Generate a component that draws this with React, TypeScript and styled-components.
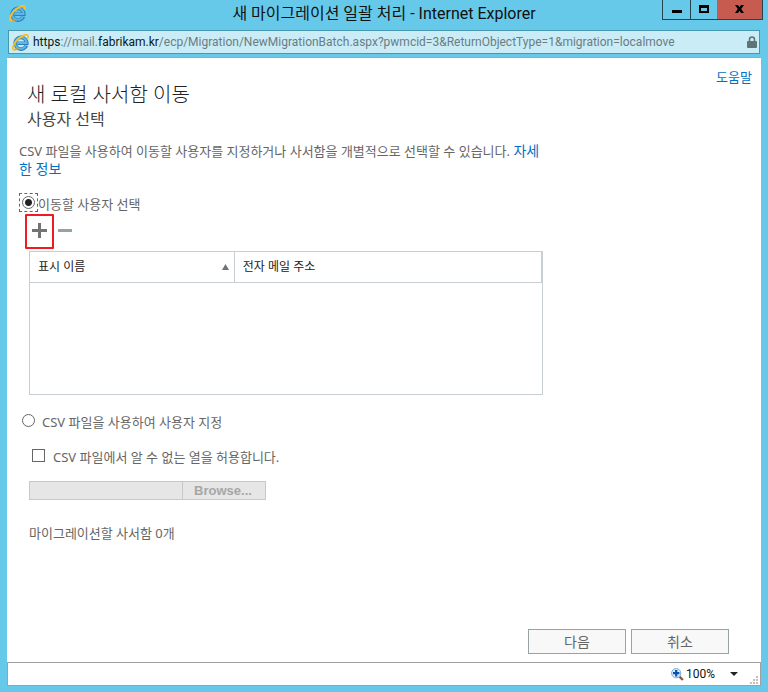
import React from "react";
import styled, { createGlobalStyle } from "styled-components";

const sans = `"Noto Sans", "Noto Sans CJK KR", sans-serif`;
const chromeSans = `Roboto, "Noto Sans CJK KR", sans-serif`;

const GlobalStyle = createGlobalStyle`
  *, *::before, *::after { box-sizing: border-box; }
  body { margin: 0; font-family: ${sans}; background: #66c9ea; }
  button, input { font-family: inherit; margin: 0; }
  a { color: #0072c6; text-decoration: none; }
`;

const Window = styled.div`
  display: flex;
  flex-direction: column;
  min-height: 100vh;
  padding: 0 7px 6px;
  background: #66c9ea;
`;

const TitleBar = styled.header`
  display: grid;
  grid-template-columns: 100px 1fr 100px;
  height: 30px;
`;

const TitleIcon = styled.span`
  display: flex;
  padding: 5px 0 0 2px;
`;

const WindowTitle = styled.h1`
  margin: 0;
  text-align: center;
  font-family: ${chromeSans};
  font-size: 16px;
  line-height: 28px;
  font-weight: 400;
  color: #111;
  white-space: nowrap;
`;

const WindowButtons = styled.div`
  display: flex;
  justify-content: flex-end;
  height: 20px;
  margin-right: -2px;
`;

const WindowButton = styled.button<{ $width: number; $close?: boolean }>`
  display: flex;
  align-items: center;
  justify-content: center;
  width: ${(p) => p.$width}px;
  height: 20px;
  padding: 0 0 1px;
  border: 1px solid #26434e;
  border-top: 0;
  border-left-width: ${(p) => (p.$close ? 0 : 1)}px;
  margin-right: ${(p) => (p.$close ? 0 : -1)}px;
  background: ${(p) => (p.$close ? "#c75b50" : "#66c9ea")};
`;

const AddressBar = styled.div`
  display: flex;
  align-items: center;
  gap: 4px;
  height: 24px;
  margin: 0 1px 3px;
  padding: 0 2px 0 3px;
  border: 1px solid #4797b0;
  background: #c9ecf7;
`;

const Address = styled.span`
  flex: 1;
  overflow: hidden;
  font-family: ${chromeSans};
  font-size: 12px;
  line-height: 22px;
  color: #6b7c83;
  white-space: nowrap;

  b {
    font-weight: 400;
    color: #0b1a20;
  }
`;

const Page = styled.main`
  flex: 1;
  display: flex;
  flex-direction: column;
  padding: 11px 9px 8px 12px;
  border-top: 1px solid #8daebb;
  background: #fff;
  color: #666;
  font-size: 13px;
  line-height: 18px;
`;

const HelpRow = styled.nav`
  display: flex;
  justify-content: flex-end;
  line-height: 16px;
`;

const Heading = styled.h2`
  margin: 0 0 0 8px;
  font-size: 20px;
  line-height: 20px;
  font-weight: 300;
  color: #222;
`;

const SubHeading = styled.h3`
  margin: 0 0 0 8px;
  font-size: 16px;
  line-height: 28px;
  font-weight: 400;
  color: #444;
`;

const Form = styled.form`
  flex: 1;
  display: flex;
  flex-direction: column;
`;

const Description = styled.p`
  max-width: 532px;
  margin: 9px 0 15px;
`;

const MoreLink = styled.a`
  font-size: 14px;
`;

const Choice = styled.label<{ $gap?: number }>`
  display: flex;
  align-items: center;
  gap: ${(p) => p.$gap ?? 0}px;
  height: 21px;
`;

const NestedChoice = styled(Choice)`
  margin: 14px 0 0 10px;
`;

const TickFrame = styled.span`
  display: flex;
  align-self: flex-start;
  padding: 3px;

  &:has(input[type="radio"]:checked) {
    outline: 1px dashed #666;
    outline-offset: -1px;
  }
`;

const Tick = styled.input`
  appearance: none;
  flex: none;
  width: 13px;
  height: 13px;
  border: 1px solid #666;
  background: #fff;

  &[type="radio"] {
    border-radius: 50%;
  }

  &:checked {
    background: radial-gradient(circle, #222 0 3px, #fff 4px);
  }
`;

const ToolBar = styled.div`
  display: flex;
  align-items: center;
  gap: 2px;
  margin: 0 0 2px 6px;
`;

const ToolButton = styled.button<{ $marked?: boolean }>`
  display: flex;
  align-items: center;
  justify-content: center;
  width: ${(p) => (p.$marked ? 29 : 18)}px;
  height: 35px;
  padding: 0 0 2px;
  border: ${(p) => (p.$marked ? "2px solid #ed1c24" : "0")};
  border-radius: 1px;
  background: none;
`;

const MailboxTable = styled.table`
  width: 514px;
  max-width: calc(100% - 10px);
  margin: 0 0 16px 10px;
  border: 1px solid #c8cfd2;
  border-spacing: 0;
  table-layout: fixed;
`;

const ColumnHeader = styled.th<{ $width?: string }>`
  width: ${(p) => p.$width ?? "auto"};
  height: 31px;
  padding: 0 5px 0 8px;
  border-right: 1px solid #c8cfd2;
  border-bottom: 1px solid #c8cfd2;
  font-size: 12px;
  line-height: 18px;
  font-weight: 400;
  text-align: left;
  color: #222;
`;

const HeaderContent = styled.span`
  display: flex;
  align-items: center;
  justify-content: space-between;
`;

const EmptyCell = styled.td`
  height: 111px;
  padding: 0;
`;

const FilePicker = styled.div`
  display: flex;
  margin: 14px 0 24px 10px;
`;

const FileName = styled.input`
  width: 154px;
  height: 19px;
  border: 1px solid #c8c8c8;
  background: #e6e6e6;
`;

const Browse = styled.button`
  width: 84px;
  height: 19px;
  margin-left: -1px;
  padding: 0 2px 0 0;
  border: 1px solid #c8c8c8;
  background: #e6e6e6;
  color: #a6a6a6;
  font: bold 13px/16px "Liberation Sans", sans-serif;
`;

const Total = styled.p`
  margin: 0 10px;
`;

const Actions = styled.div`
  display: flex;
  justify-content: flex-end;
  gap: 5px;
  margin-top: auto;
  padding-right: 23px;
`;

const ActionButton = styled.button`
  width: 98px;
  height: 25px;
  padding: 0;
  border: 1px solid #98a3a6;
  background: #f8f8f8;
  color: #666;
  font-size: 14px;
  line-height: 20px;
`;

const StatusBar = styled.footer`
  display: flex;
  align-items: center;
  justify-content: flex-end;
  height: 24px;
  padding-right: 1px;
  border: 1px solid #a0a0a0;
  background: #fff;
`;

const ZoomButton = styled.button`
  display: flex;
  align-items: center;
  gap: 2px;
  height: 20px;
  padding: 0;
  border: 0;
  background: none;
  color: #111;
  font-family: ${chromeSans};
  font-size: 12px;
  line-height: 20px;
`;

const ZoomArrow = styled.span`
  display: flex;
  margin: 0 12px 0 13px;
`;

const Grip = styled.svg`
  align-self: flex-end;
`;

function ExplorerLogo() {
  return (
    <svg width="17" height="17" viewBox="0 0 17 17" aria-hidden="true">
      <path
        d="M14.400 11.400A5.800 5.800 0 1 1 14.800 9.200H5.400"
        fill="none"
        stroke="#2a7fbd"
        strokeWidth="3.600"
      />
      <path
        d="M14.200 11.200A5.700 5.700 0 1 1 14.600 9.100H5.400"
        fill="none"
        stroke="#5db5e8"
        strokeWidth="2"
      />
      <path
        d="M3.200 15.600C-.6 16.400.4 11.200 4.600 6.600 8.800 2 14.600-.6 15.800 1.500c.5.9.2 2-.4 3.200"
        fill="none"
        stroke="#f6c02a"
        strokeWidth="1.900"
      />
      <path
        d="M3 15.600c1.200-.1 2.400-.7 3.600-1.500"
        fill="none"
        stroke="#e0a21a"
        strokeWidth="1.300"
      />
    </svg>
  );
}

function LockIcon() {
  return (
    <svg width="10" height="12" viewBox="0 0 10 12" aria-hidden="true">
      <path d="M2.500 6V3.500a2.500 2.500 0 0 1 5 0V6" fill="none" stroke="#5f7379" strokeWidth="1.600" />
      <rect y="5" width="10" height="7" rx="1" fill="#5f7379" />
    </svg>
  );
}

function MagnifierIcon() {
  return (
    <svg width="13" height="13" viewBox="0 0 13 13" aria-hidden="true">
      <path d="M8.500 8.500l3.300 3.500" stroke="#8a5a3c" strokeWidth="2.400" />
      <circle cx="5.200" cy="5.200" r="4.600" fill="#d8efff" stroke="#7aa7cf" />
      <path d="M5.200 2v6.400M2 5.200h6.400" stroke="#0a50b4" strokeWidth="2.200" />
    </svg>
  );
}

export default function App() {
  return (
    <>
      <GlobalStyle />
      <Window>
        <TitleBar>
          <TitleIcon>
            <ExplorerLogo />
          </TitleIcon>
          <WindowTitle>새 마이그레이션 일괄 처리 - Internet Explorer</WindowTitle>
          <WindowButtons>
            <WindowButton $width={29} aria-label="최소화">
              <svg width="10" height="12"><path d="M0 7h10v3H0z" /></svg>
            </WindowButton>
            <WindowButton $width={28} aria-label="최대화">
              <svg width="10" height="8"><path d="M0 0h10v8H0zM2 3v3h6V3z" fillRule="evenodd" /></svg>
            </WindowButton>
            <WindowButton $width={46} $close aria-label="닫기">
              <svg width="9" height="8" viewBox="0 0 9 8">
                <path d="M0 0h3l1.500 2.200L6 0h3L6.200 4 9 8H6L4.500 5.800 3 8H0l2.800-4z" />
              </svg>
            </WindowButton>
          </WindowButtons>
        </TitleBar>
        <AddressBar>
          <ExplorerLogo />
          <Address>
            <b>https</b>://mail.<b>fabrikam.kr</b>
            /ecp/Migration/NewMigrationBatch.aspx?pwmcid=3&amp;ReturnObjectType=1&amp;migration=localmove
          </Address>
          <LockIcon />
        </AddressBar>
        <Page>
          <HelpRow>
            <a href="#help">도움말</a>
          </HelpRow>
          <Heading>새 로컬 사서함 이동</Heading>
          <SubHeading>사용자 선택</SubHeading>
          <Form onSubmit={(e) => e.preventDefault()}>
            <Description>
              CSV 파일을 사용하여 이동할 사용자를 지정하거나 사서함을 개별적으로 선택할 수 있습니다.{" "}
              <MoreLink href="#more">자세한 정보</MoreLink>
            </Description>
            <Choice>
              <TickFrame>
                <Tick type="radio" name="source" defaultChecked />
              </TickFrame>
              이동할 사용자 선택
            </Choice>
            <ToolBar>
              <ToolButton type="button" $marked aria-label="추가">
                <svg width="15" height="15"><path d="M6 0h3v6h6v3H9v6H6V9H0V6h6z" fill="#737373" /></svg>
              </ToolButton>
              <ToolButton type="button" aria-label="제거">
                <svg width="14" height="3"><path d="M0 0h14v3H0z" fill="#95a3a7" /></svg>
              </ToolButton>
            </ToolBar>
            <MailboxTable>
              <thead>
                <tr>
                  <ColumnHeader $width="40%" scope="col" aria-sort="ascending">
                    <HeaderContent>
                      표시 이름
                      <svg width="7" height="6"><path d="M3.500 0L7 6H0z" fill="#737373" /></svg>
                    </HeaderContent>
                  </ColumnHeader>
                  <ColumnHeader scope="col">전자 메일 주소</ColumnHeader>
                </tr>
              </thead>
              <tbody>
                <tr>
                  <EmptyCell colSpan={2} />
                </tr>
              </tbody>
            </MailboxTable>
            <Choice $gap={4}>
              <TickFrame>
                <Tick type="radio" name="source" />
              </TickFrame>
              CSV 파일을 사용하여 사용자 지정
            </Choice>
            <NestedChoice $gap={5}>
              <TickFrame>
                <Tick type="checkbox" />
              </TickFrame>
              CSV 파일에서 알 수 없는 열을 허용합니다.
            </NestedChoice>
            <FilePicker>
              <FileName disabled aria-label="CSV 파일" />
              <Browse type="button" disabled>Browse...</Browse>
            </FilePicker>
            <Total>마이그레이션할 사서함 0개</Total>
            <Actions>
              <ActionButton type="submit">다음</ActionButton>
              <ActionButton type="button">취소</ActionButton>
            </Actions>
          </Form>
        </Page>
        <StatusBar>
          <ZoomButton type="button">
            <MagnifierIcon />
            100%
            <ZoomArrow>
              <svg width="8" height="4"><path d="M0 0h8L4 4z" fill="#222" /></svg>
            </ZoomArrow>
          </ZoomButton>
          <Grip width="9" height="9" aria-hidden="true">
            <path d="M6 0h2v2H6zM3 3h2v2H3zM6 3h2v2H6zM0 6h2v2H0zM3 6h2v2H3zM6 6h2v2H6z" fill="#c0c0c0" />
          </Grip>
        </StatusBar>
      </Window>
    </>
  );
}
